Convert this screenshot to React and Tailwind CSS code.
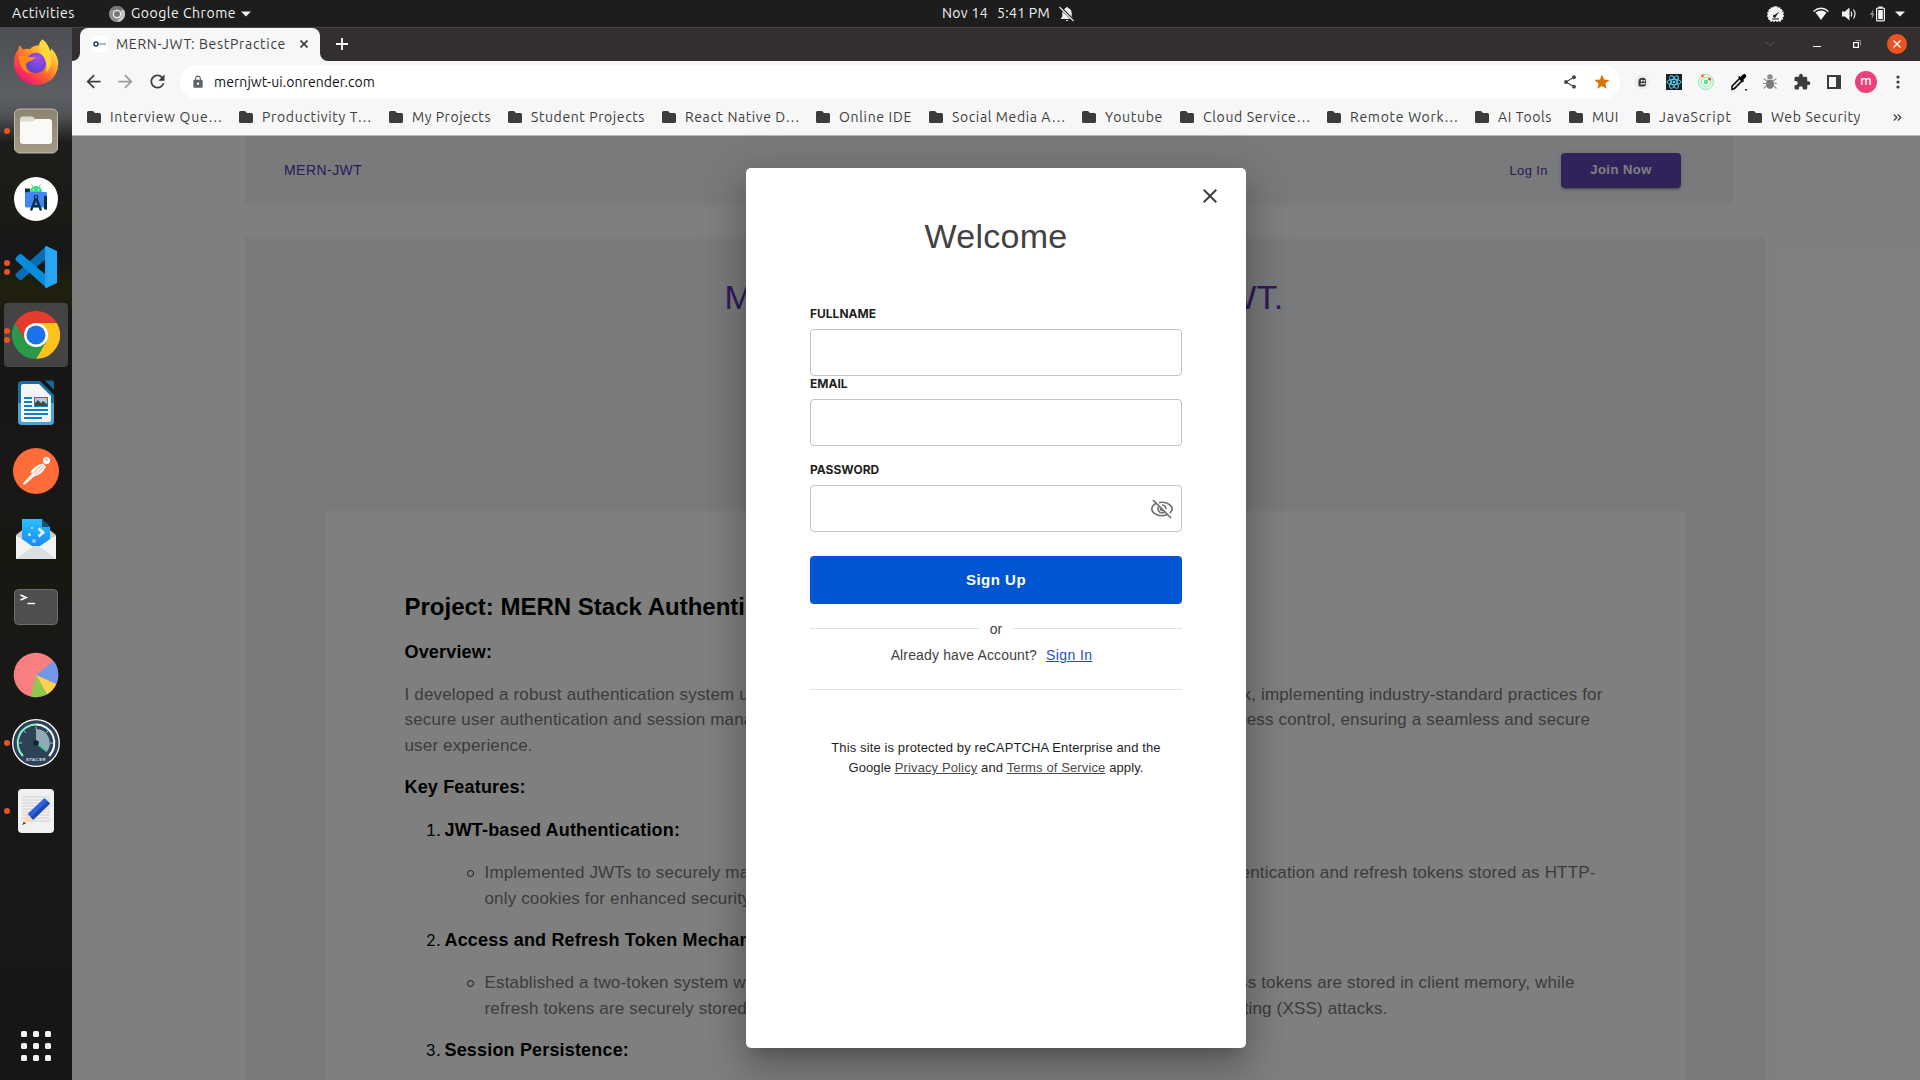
import { useLayoutEffect, useRef } from "react";
import {
  MdArrowBack,
  MdArrowForward,
  MdClose,
  MdExtension,
  MdLock,
  MdRefresh,
  MdShare,
  MdStar,
} from "react-icons/md";

/* Single-line label that spreads its letters over a given width. */
function Label({ text, width, className = "" }) {
  const ref = useRef(null);
  useLayoutEffect(() => {
    const el = ref.current;
    el.style.letterSpacing = "0px";
    const natural = el.getBoundingClientRect().width;
    el.style.letterSpacing = `${(width - natural) / text.length}px`;
  }, [text, width]);
  return (
    <span
      ref={ref}
      className={`inline-block whitespace-pre font-['Ubuntu','Noto_Sans',sans-serif] ${className}`}
    >
      {text}
    </span>
  );
}

/* ---------- dock icons ---------- */

const Firefox = () => (
  <svg width="48" height="48" viewBox="0 0 48 48">
    <defs>
      <linearGradient id="ffBody" x1="0.85" y1="0.1" x2="0.2" y2="0.95">
        <stop offset="0" stopColor="#fff04a" />
        <stop offset="0.35" stopColor="#ffa42c" />
        <stop offset="0.65" stopColor="#ff5634" />
        <stop offset="1" stopColor="#e8127c" />
      </linearGradient>
      <radialGradient id="ffGlobe" cx="0.6" cy="0.3" r="0.8">
        <stop offset="0" stopColor="#a14bf0" />
        <stop offset="1" stopColor="#4846c8" />
      </radialGradient>
    </defs>
    <path d="M30.5 0.500C35 4 37.500 9 38 12.500C39 11.500 39 10.500 39 9.500C44 14 46.500 20 46.300 25.500C45.500 38 36 46 24.500 46C12 46 2 36.500 2 24.500C2 17.500 4 13 6.500 10.500C6.500 9.500 6.800 8 7.600 6.500C9 8 10 9 11 10.500C14 9.500 16 9.700 18 10.200C20 7 24 6 27 6.500C27 4.500 28.500 2 30.500 0.500Z" fill="url(#ffBody)" />
    <circle cx="24" cy="24" r="10.200" fill="url(#ffGlobe)" />
    <path d="M7 17C12 16 18 19.500 24 17.500C22.500 22 17 21 14.500 24.500C12.500 28 15 33 20 34C13 35 7 28 7 17Z" fill="#ff8a1f" />
    <path d="M30.500 0.500C35 4 37.500 9 38 12.500C40 20 40 28 34 34C36 27 33 18 29 15C26 12 26 4 30.500 0.500Z" fill="#ffd93b" opacity="0.85" />
  </svg>
);

const Files = () => (
  <svg width="48" height="48" viewBox="0 0 48 48">
    <defs>
      <linearGradient id="flBg" x1="0" y1="0" x2="0" y2="1">
        <stop offset="0" stopColor="#8d8471" />
        <stop offset="1" stopColor="#a39b86" />
      </linearGradient>
    </defs>
    <rect x="2.500" y="2" width="43" height="44" rx="5" fill="url(#flBg)" stroke="#c9c3b3" strokeWidth="0.900" />
    <path d="M8 12.500a3 3 0 0 1 3-3h9c2 0 2.500 3 5 3h12v10H8Z" fill="#dedacf" />
    <path d="M8 16a2 2 0 0 1 2-1.500h10c2 0 2.500-2.500 5-2.500h12a3 3 0 0 1 3 3v19a3 3 0 0 1-3 3H11a3 3 0 0 1-3-3Z" fill="#faf9f8" />
  </svg>
);

const AndroidStudio = () => (
  <svg width="48" height="48" viewBox="0 0 48 48">
    <circle cx="24" cy="24" r="22" fill="#fff" />
    <path d="M13 13.500h5v5h-5Z" fill="#073042" />
    <path d="M17.500 17.500a6.500 6.500 0 0 1 13 0Z" fill="#3ddc84" />
    <path d="M19.500 9.500l2 3M28.500 9.500l-2 3" stroke="#3ddc84" strokeWidth="0.900" />
    <circle cx="21.500" cy="14.800" r="0.700" fill="#fff" />
    <circle cx="26.500" cy="14.800" r="0.700" fill="#fff" />
    <rect x="13" y="17" width="22" height="15.500" rx="1.500" fill="#4285f4" />
    <path d="M32 21h3v14l-3-1Z" fill="#073042" />
    <path d="M24 22.500L19 35.500M24 22.500L29 35.500M20.500 30.500q3.500 1.500 7 0" stroke="#073042" strokeWidth="2.300" fill="none" />
    <circle cx="24" cy="22.300" r="1.800" fill="#4285f4" stroke="#073042" strokeWidth="1.200" />
  </svg>
);

const VsCode = () => (
  <svg width="48" height="48" viewBox="0 0 48 48">
    <path d="M34 3.500L4 30.500Q3 32 4 33.500L7 36.500Q8.500 37.500 10 36.500L35 15Z" fill="#0a6cb4" />
    <path d="M4 17.500Q3 16 4 14.500L7 11.500Q8.500 10.500 10 11.500L35 33L34 44.500Z" fill="#0b8bdb" />
    <path d="M34 3L45 8V40L34 45Q35 44.500 35 42V6Q35 4 34 3Z" fill="#26a6f5" />
    <path d="M33 3.500L35.500 3V45L33 44.500Z" fill="#26a0ee" />
  </svg>
);

const Chrome = () => (
  <svg width="48" height="48" viewBox="0 0 48 48">
    <path d="M24 24L3.200 12A24 24 0 0 1 44.800 12Z" fill="#e33b2e" />
    <path d="M24 24V12H44.800A24 24 0 0 1 24 48L34.400 30Z" fill="#fcc31e" />
    <path d="M24 24L34.400 30L24 48A24 24 0 0 1 3.200 12L13.600 30Z" fill="#2a9a48" />
    <path d="M3.200 12L13.600 30L24 24V12Z" fill="#e33b2e" />
    <circle cx="24" cy="24" r="12" fill="#fff" />
    <circle cx="24" cy="24" r="9.500" fill="#1a73e8" />
  </svg>
);

const Writer = () => (
  <svg width="48" height="48" viewBox="0 0 48 48">
    <path d="M10 2H28L42 16V42a4 4 0 0 1-4 4H10a4 4 0 0 1-4-4V6a4 4 0 0 1 4-4Z" fill="#1571a8" />
    <path d="M6 24H42V42a4 4 0 0 1-4 4H10a4 4 0 0 1-4-4Z" fill="#4ba3d2" />
    <path d="M11 5H27L39 17V41a2 2 0 0 1-2 2H11a2 2 0 0 1-2-2V7a2 2 0 0 1 2-2Z" fill="#f5f5f5" />
    <path d="M33 1.500H40a2 2 0 0 1 2 2V11Z" fill="#12699e" />
    <path d="M12 19H20M12 23H20M12 27H20M12 31H36M12 35H36M12 39H30" stroke="#0f80c0" strokeWidth="2" />
    <rect x="22" y="18" width="14" height="10" fill="#1783bf" />
    <rect x="23" y="19" width="12" height="8" fill="#9fd2ee" />
    <path d="M32 19h3v3Z" fill="#f9b916" />
    <path d="M23 27v-3l3-3 3 3 2-2 4 3v2Z" fill="#44484a" />
  </svg>
);

const Postman = () => (
  <svg width="48" height="48" viewBox="0 0 48 48">
    <circle cx="24" cy="24" r="23" fill="#ff6c37" />
    <circle cx="34.500" cy="13.500" r="3.500" fill="#fff" />
    <path d="M31 16.500L34 19.500Q30 28 22 29.500L13 37.500L10.500 37L21 25.500L18 26Q22 18.500 31 16.500Z" fill="#fff" />
    <path d="M21.500 26L30 18M23.500 27.500L32 19.500M33.500 11l2.500 3.500" stroke="#ff6c37" strokeWidth="0.800" />
  </svg>
);

const Mailspring = () => (
  <svg width="48" height="48" viewBox="0 0 48 48">
    <defs>
      <linearGradient id="mlDoc" x1="0" y1="0" x2="0" y2="1">
        <stop offset="0" stopColor="#27c0fb" />
        <stop offset="1" stopColor="#1d86f2" />
      </linearGradient>
    </defs>
    <path d="M4 20L14 12H34L44 20L30 32H18Z" fill="#c9ced2" />
    <path d="M10 4H30L38 12V26L28 32H20L10 25Z" fill="url(#mlDoc)" />
    <path d="M30 4L38 12H30Z" fill="#1d4d6d" />
    <path d="M26.500 13.500L31 17.500L26.500 21.500" fill="none" stroke="#e9f5fe" strokeWidth="2.800" />
    <circle cx="17.500" cy="19.500" r="1.500" fill="#c9ecff" />
    <circle cx="20" cy="13" r="1" fill="#c9ecff" />
    <circle cx="22" cy="26" r="2" fill="#8fc9ff" />
    <path d="M4 20L20 31Q24 32 28 31L44 20V44H4Z" fill="#f2f3f4" />
    <path d="M4 44L22 31H27L44 44Z" fill="#dcdfe1" />
  </svg>
);

const Terminal = () => (
  <svg width="48" height="48" viewBox="0 0 48 48">
    <rect x="2.500" y="6.500" width="43" height="35" rx="4" fill="#4e4e4e" stroke="#6e6e6e" />
    <path d="M8.500 12L14 14.500L8.500 17" fill="none" stroke="#fff" strokeWidth="1.800" />
    <path d="M15.500 20.500H23" stroke="#fff" strokeWidth="1.500" />
  </svg>
);

const DiskUsage = () => (
  <svg width="48" height="48" viewBox="0 0 48 48">
    <circle cx="24" cy="24" r="22.300" fill="#f77f7f" />
    <path d="M24 24L41.500 10A22.300 22.300 0 0 1 44.200 33Z" fill="#7497ee" />
    <path d="M24 24L44.200 33A22.300 22.300 0 0 1 35 43.300Z" fill="#fad152" />
    <path d="M24 24L35 43.300A22.300 22.300 0 0 1 19 45.700Z" fill="#8cc84e" />
  </svg>
);

const Stacer = () => (
  <svg width="48" height="48" viewBox="0 0 48 48">
    <circle cx="24" cy="24" r="23.300" fill="#2f4157" stroke="#fff" strokeWidth="1.300" />
    <path d="M11 37A18.500 18.500 0 0 1 24 5.500" fill="none" stroke="#7ff0c2" strokeWidth="2" />
    <path d="M24 5.500A18.500 18.500 0 0 1 37 37" fill="none" stroke="#f0fcf8" strokeWidth="2" />
    <path d="M24 24V10A14 14 0 0 1 34.500 33Z" fill="#a9c6cd" opacity="0.800" />
    <path d="M24 24L34 32" stroke="#2ecc9b" strokeWidth="1.500" />
    <path d="M24 7.500v3M7 24h3M38 24h3M12 12l2 2M36 12l-2 2" stroke="#b9c9d0" strokeWidth="0.900" />
    <circle cx="24" cy="24" r="2.800" fill="#17222e" />
    <text x="24" y="41.500" textAnchor="middle" fontSize="4.200" fontWeight="700" letterSpacing="0.500" fill="#dfe6ea" fontFamily="Liberation Sans">STACER</text>
  </svg>
);

const TextEditor = () => (
  <svg width="48" height="48" viewBox="0 0 48 48">
    <rect x="6" y="2" width="36" height="44" rx="4" fill="#f1f1f1" />
    <path d="M10 10H38M10 13H38M10 16H38M10 19H38M10 22H38M10 25H38M10 28H38M10 31H38M10 34H38" stroke="#cfcfcf" strokeWidth="1" />
    <path d="M15.500 27L32.500 11L38 16.500L21 33Z" fill="#2f63dd" />
    <path d="M18.500 30.500L35.500 14L38 16.500L21 33Z" fill="#1f48b5" />
    <path d="M15.500 27L21 33L10.500 38Z" fill="#fbd9b8" />
    <path d="M11.800 34.800L13.800 36.500L10.200 38Z" fill="#3a3a3a" />
  </svg>
);

const DOCK = [
  { name: "firefox", Icon: Firefox, dots: 0 },
  { name: "files", Icon: Files, dots: 1 },
  { name: "android-studio", Icon: AndroidStudio, dots: 0 },
  { name: "vscode", Icon: VsCode, dots: 2 },
  { name: "chrome", Icon: Chrome, dots: 2, active: true },
  { name: "writer", Icon: Writer, dots: 0 },
  { name: "postman", Icon: Postman, dots: 0 },
  { name: "mail", Icon: Mailspring, dots: 0 },
  { name: "terminal", Icon: Terminal, dots: 0 },
  { name: "disk-usage", Icon: DiskUsage, dots: 0 },
  { name: "stacer", Icon: Stacer, dots: 1 },
  { name: "text-editor", Icon: TextEditor, dots: 1 },
];

function Dock() {
  return (
    <aside className="flex w-[72px] shrink-0 flex-col bg-[linear-gradient(180deg,#4b4d52_0px,#5c5f63_70px,#505356_88px,#1d1d1b_115px,#191b15_190px,#16171a_230px,#20200f_260px,#171615_310px,#191817_480px,#15180f_520px,#191817_620px,#161817_830px,#171615_1052px)] pt-0.5">
      {DOCK.map(({ name, Icon, dots, active }) => (
        <div key={name} className="relative flex h-[68px] items-center justify-center">
          <div
            className={
              active
                ? "flex size-16 items-center justify-center rounded bg-[#454444]"
                : "flex size-16 items-center justify-center"
            }
          >
            <Icon />
          </div>
          <div className="absolute inset-y-0 left-1 flex flex-col items-center justify-center gap-[3px]">
            {Array.from({ length: dots }, (_, i) => (
              <span key={i} className="size-1.5 rounded-full bg-[#e95420]" />
            ))}
          </div>
        </div>
      ))}
      <div className="mt-auto mb-[19px] grid grid-cols-3 gap-1.5 self-center">
        {Array.from({ length: 9 }, (_, i) => (
          <span key={i} className="size-1.5 rounded-[1.500px] bg-[#f2f1ef]" />
        ))}
      </div>
    </aside>
  );
}

/* ---------- system bar ---------- */

const Caret = () => (
  <svg width="10" height="6" viewBox="0 0 10 6">
    <path d="M0 0.500H10L5 5.500Z" fill="#f2f2f2" />
  </svg>
);

function SystemBar() {
  return (
    <header className="flex h-[27px] items-center bg-[#1d1d1d] text-[14px] leading-[27px] text-[#f2f2f2]">
      <div className="flex w-[942px] shrink-0 items-center pl-3">
        <div className="w-[97px]">
          <Label text="Activities" width={63} />
        </div>
        <svg className="mr-1.5" width="16" height="16" viewBox="0 0 16 16">
          <circle cx="8" cy="8" r="8" fill="#8f8f8f" />
          <path d="M1 4A8 8 0 0 1 15 4H8Z" fill="#777" />
          <path d="M8 16L12 9.500V4H15A8 8 0 0 1 8 16Z" fill="#c4c4c4" />
          <circle cx="8" cy="8" r="4.200" fill="#f2f2f2" />
          <circle cx="8" cy="8" r="3" fill="#777" />
        </svg>
        <Label text="Google Chrome" width={105} className="mr-[5px]" />
        <Caret />
      </div>
      <Label text="Nov 14" width={46} className="mr-[9px]" />
      <Label text="5:41 PM" width={53} className="mr-[9px]" />
      <svg width="16" height="16" viewBox="0 0 16 16">
        <path d="M8 1a1 1 0 0 1 1 1q3.500 1 3.700 5v3.500L14.500 13H1.500L3.300 10.500V7Q3.500 3 7 2a1 1 0 0 1 1-1ZM6.500 14h3q-1.500 2-3 0Z" fill="#f2f2f2" />
        <path d="M1 1L15 15" stroke="#1d1d1d" strokeWidth="2.600" />
        <path d="M0.500 1L14.500 15" stroke="#f2f2f2" strokeWidth="1.100" />
      </svg>
      <div className="ml-auto flex items-center pr-[15px]">
        <svg className="mr-[29px]" width="17" height="16" viewBox="0 0 17 16">
          <path d="M8.500 1A8 7.800 0 0 1 14.500 13.500L13 15H4L2.500 13.500A8 7.800 0 0 1 8.500 1Z" fill="#f2f2f2" stroke="#f2f2f2" strokeWidth="1.600" strokeDasharray="2 1" />
          <path d="M12.500 5.500L9 10.200A1.500 1.500 0 1 1 7.800 8.800Z" fill="#1d1d1d" />
          <path d="M5 13H12" stroke="#1d1d1d" />
        </svg>
        <svg className="mr-[13px]" width="16" height="14" viewBox="0 0 16 14">
          <path d="M0.500 4.500Q8 -2 15.500 4.500" fill="none" stroke="#f2f2f2" strokeWidth="1.400" />
          <path d="M2.500 5.500Q8 1.500 13.500 5.500L8 13Z" fill="#f2f2f2" />
        </svg>
        <svg className="mr-[13px]" width="15" height="14" viewBox="0 0 15 14">
          <path d="M0 4.500H3L7.500 0.500V13.500L3 9.500H0Z" fill="#f2f2f2" />
          <path d="M9 4.500Q10.500 7 9 9.500M11.500 2.500Q14.500 7 11.500 11.500" fill="none" stroke="#f2f2f2" strokeWidth="1.200" />
        </svg>
        <svg className="mr-[10px]" width="15" height="16" viewBox="0 0 15 16">
          <path d="M3.500 3L0 9H2L1.500 13.500L4.500 7.500H2.800Z" fill="#8c8c8c" />
          <rect x="6.600" y="2.100" width="7.800" height="12.800" rx="1" fill="none" stroke="#f2f2f2" strokeWidth="1.200" />
          <rect x="8.200" y="4" width="4.600" height="9.200" fill="#f2f2f2" />
          <path d="M8.500 0.500h4v1.500h-4Z" fill="#f2f2f2" />
        </svg>
        <Caret />
      </div>
    </header>
  );
}

/* ---------- browser chrome ---------- */

function TabStrip() {
  return (
    <div className="flex h-[34px] items-end border-t border-[#474545] bg-[#332f30]">
      <svg className="shrink-0" width="8" height="8" viewBox="0 0 8 8">
        <path d="M8 0V8H0A8 8 0 0 0 8 0Z" fill="#f7f7f7" />
      </svg>
      <div className="flex h-[33px] w-60 items-center rounded-t-lg bg-[#f7f7f7] pb-0.5 pl-3">
        <svg className="mr-2 shrink-0" width="16" height="16" viewBox="0 0 16 16">
          <rect width="16" height="16" fill="#fff" />
          <circle cx="4" cy="8" r="2" fill="none" stroke="#1f3b5c" strokeWidth="1.500" />
          <path d="M6 8H14" stroke="#5e7b9b" strokeWidth="1.500" strokeDasharray="1.500 0.600" />
        </svg>
        <Label text="MERN-JWT: BestPractice" width={170} className="text-[14px] leading-5 text-[#3c3c3c]" />
        <svg className="ml-3.5" width="8" height="8" viewBox="0 0 8 8">
          <path d="M0.500 0.500L7.500 7.500M7.500 0.500L0.500 7.500" stroke="#3c3c3c" strokeWidth="1.700" />
        </svg>
      </div>
      <svg className="shrink-0" width="8" height="8" viewBox="0 0 8 8">
        <path d="M0 0V8H8A8 8 0 0 1 0 0Z" fill="#f7f7f7" />
      </svg>
      <div className="flex h-[33px] flex-1 items-center pb-px pl-2">
        <svg width="12" height="12" viewBox="0 0 12 12">
          <path d="M6 0V12M0 6H12" stroke="#fff" strokeWidth="1.800" />
        </svg>
        <div className="ml-auto flex h-full items-center pr-[13px]">
          <svg className="mr-[38px]" width="10" height="6" viewBox="0 0 10 6">
            <path d="M0.500 0.500L5 5L9.500 0.500" fill="none" stroke="#454343" strokeWidth="1.500" />
          </svg>
          <svg className="mr-8" width="8" height="8" viewBox="0 0 8 8">
            <path d="M0 6.500H8" stroke="#fff" />
          </svg>
          <svg className="mr-[26px]" width="8" height="8" viewBox="0 0 8 8">
            <path d="M2.500 0.500H7.500V5.500" fill="none" stroke="#8d8b8b" />
            <rect x="0.600" y="2.600" width="4.800" height="4.800" fill="none" stroke="#fff" strokeWidth="1.200" />
          </svg>
          <span className="flex size-5 items-center justify-center rounded-full bg-[#e95420]">
            <svg width="8" height="8" viewBox="0 0 8 8">
              <path d="M0.500 0.500L7.500 7.500M7.500 0.500L0.500 7.500" stroke="#fff" strokeWidth="1.400" />
            </svg>
          </span>
        </div>
      </div>
    </div>
  );
}

const Ghost = () => (
  <svg width="16" height="16" viewBox="0 0 16 16">
    <circle cx="8" cy="8" r="7.500" fill="#ededed" />
    <path d="M4.500 12V7.500Q4.500 3.800 8.500 3.800Q12 3.800 12 7V10.500Q12 12.500 9.500 12.500H6Z" fill="#3a3a3a" />
    <circle cx="7.800" cy="6.800" r="1" fill="#fff" />
    <circle cx="10.300" cy="6.800" r="0.900" fill="#fff" />
    <path d="M6.500 9.800h5" stroke="#fff" strokeWidth="1.100" />
  </svg>
);

const ReactBadge = () => (
  <svg width="16" height="16" viewBox="0 0 16 16">
    <rect width="16" height="16" fill="#1b2127" />
    <g fill="none" stroke="#61dafb" strokeWidth="0.900">
      <ellipse cx="8" cy="8" rx="7" ry="2.700" />
      <ellipse cx="8" cy="8" rx="7" ry="2.700" transform="rotate(60 8 8)" />
      <ellipse cx="8" cy="8" rx="7" ry="2.700" transform="rotate(120 8 8)" />
    </g>
    <circle cx="8" cy="8" r="1.300" fill="#61dafb" />
  </svg>
);

const Orbit = () => (
  <svg width="16" height="16" viewBox="0 0 16 16">
    <circle cx="8" cy="8" r="7.400" fill="none" stroke="#7ee8a2" strokeWidth="1" />
    <circle cx="8" cy="8" r="4.800" fill="none" stroke="#7ee8a2" strokeWidth="1" />
    <circle cx="8" cy="8" r="2.300" fill="#5fe08c" />
    <circle cx="4.500" cy="1.800" r="1.600" fill="#ff7a45" />
    <circle cx="11.500" cy="5" r="1.600" fill="#f4502a" />
  </svg>
);

const Dropper = () => (
  <svg className="ml-0.5" width="16" height="18" viewBox="0 0 16 18">
    <path d="M1 16.500V13L8.500 5.500L11 8L3.500 15.500Z" fill="#d9d9d9" stroke="#000" strokeWidth="1.500" />
    <path d="M7 4L8.500 3L9.500 4L12 1.500Q14 0.500 15 2Q15.700 3.500 14.500 4.500L12.200 7L13 8L11.800 9.500Z" fill="#000" />
    <rect x="14.200" y="16" width="1.600" height="1.600" fill="#000" />
  </svg>
);

const Bug = () => (
  <svg width="14" height="16" viewBox="0 0 14 16">
    <path d="M0.500 4.500L4 7M13.500 4.500L10 7M0 9.500H14M0.500 14.500L4 11.500M13.500 14.500L10 11.500" stroke="#9a9a9a" strokeWidth="1.200" />
    <ellipse cx="7" cy="10" rx="4" ry="5" fill="#7c7c7c" />
    <circle cx="7" cy="3" r="2.800" fill="#8d8d8d" />
    <path d="M4.500 5.500h5" stroke="#d0d0d0" />
  </svg>
);

const SidePanel = () => (
  <svg width="14" height="14" viewBox="0 0 14 14">
    <rect x="1" y="1" width="12" height="12" fill="none" stroke="#3c3c3c" strokeWidth="2" />
    <rect x="9" y="1" width="4" height="12" fill="#3c3c3c" />
  </svg>
);

const Avatar = () => (
  <span className="flex size-[22px] items-center justify-center rounded-full bg-[#ec407a] pb-px font-['Noto_Sans',sans-serif] text-[12px] leading-none font-medium text-white">
    m
  </span>
);

const Dots = () => (
  <svg width="4" height="14" viewBox="0 0 4 14">
    <circle cx="2" cy="2" r="1.600" fill="#3c3c3c" />
    <circle cx="2" cy="7" r="1.600" fill="#3c3c3c" />
    <circle cx="2" cy="12" r="1.600" fill="#3c3c3c" />
  </svg>
);

const Puzzle = () => <MdExtension size={18} color="#3c3c3c" />;

const EXTENSIONS = [Ghost, ReactBadge, Orbit, Dropper, Bug, Puzzle, SidePanel, Avatar, Dots];

function Toolbar() {
  return (
    <div className="flex h-[41px] items-center bg-[#f7f7f7] pl-[5.500px] pr-[6px]">
      <div className="flex size-8 items-center justify-center text-[#3c3c3c]">
        <MdArrowBack size={21} />
      </div>
      <div className="flex size-8 items-center justify-center text-[#9c9c9c]">
        <MdArrowForward size={21} />
      </div>
      <div className="flex size-8 items-center justify-center text-[#3c3c3c]">
        <MdRefresh size={21} />
      </div>
      <div className="ml-[6.500px] flex h-[34px] flex-1 items-center rounded-full bg-white pl-[11px] pr-0.5">
        <MdLock className="mr-[9px]" size={14} color="#5f6368" />
        <Label text="mernjwt-ui.onrender.com" width={161} className="text-[14px] leading-5 text-[#111]" />
        <div className="ml-auto flex size-8 items-center justify-center">
          <MdShare size={16} color="#4a4a4a" />
        </div>
        <div className="flex size-8 items-center justify-center">
          <MdStar size={18} color="#d9730d" />
        </div>
      </div>
      <div className="ml-1.5 flex">
        {EXTENSIONS.map((Ext, i) => (
          <div key={i} className="flex size-8 items-center justify-center">
            <Ext />
          </div>
        ))}
      </div>
    </div>
  );
}

const BOOKMARKS = [
  { text: "Interview Que…", width: 113, slot: "w-[152px]" },
  { text: "Productivity T…", width: 110, slot: "w-[150px]" },
  { text: "My Projects", width: 79, slot: "w-[119px]" },
  { text: "Student Projects", width: 114, slot: "w-[154px]" },
  { text: "React Native D…", width: 115, slot: "w-[154px]" },
  { text: "Online IDE", width: 73, slot: "w-[113px]" },
  { text: "Social Media A…", width: 114, slot: "w-[153px]" },
  { text: "Youtube", width: 58, slot: "w-[98px]" },
  { text: "Cloud Service…", width: 108, slot: "w-[147px]" },
  { text: "Remote Work…", width: 109, slot: "w-[148px]" },
  { text: "AI Tools", width: 54, slot: "w-[94px]" },
  { text: "MUI", width: 27, slot: "w-[67px]" },
  { text: "JavaScript", width: 73, slot: "w-[112px]" },
  { text: "Web Security", width: 90, slot: "w-[145px]" },
];

function BookmarksBar() {
  return (
    <div className="flex h-[34px] items-center border-b border-[#b8b8b8] bg-[#f7f7f7] pl-[15px] pb-[3px]">
      {BOOKMARKS.map(({ text, width, slot }) => (
        <div key={text} className={`flex shrink-0 items-center ${slot}`}>
          <svg className="mr-[9px] shrink-0" width="14" height="12" viewBox="0 0 14 12">
            <path d="M1.500 0H6L8 2H12.500A1.500 1.500 0 0 1 14 3.500V10.500A1.500 1.500 0 0 1 12.500 12H1.500A1.500 1.500 0 0 1 0 10.500V1.500A1.500 1.500 0 0 1 1.500 0Z" fill="#3c3c3c" />
          </svg>
          <Label text={text} width={width} className="text-[14px] leading-5 text-[#3c3c3c]" />
        </div>
      ))}
      <svg width="9" height="7" viewBox="0 0 9 7">
        <path d="M0.800 0.500L3.800 3.500L0.800 6.500M4.800 0.500L7.800 3.500L4.800 6.500" fill="none" stroke="#4a4a4a" strokeWidth="1.400" />
      </svg>
    </div>
  );
}

/* ---------- page ---------- */

const Line = ({ start, end, className = "" }) => (
  <span className={`flex justify-between whitespace-nowrap ${className}`}>
    <span>{start}</span>
    <span>{end}</span>
  </span>
);

const Feature = ({ n, title, children }) => (
  <li className="flex flex-col gap-4">
    <div className="flex items-center">
      <span className="w-9 text-right font-['Inter',sans-serif] text-[16px] leading-[27px] text-black tabular-nums">
        {n}.
      </span>
      <h3 className="ml-1 text-[18px] leading-[27px] font-bold tracking-[0.170px] text-black">{title}</h3>
    </div>
    {children && (
      <div className="flex pl-[62px]">
        <span className="mt-[10px] mr-[11px] size-[7px] shrink-0 rounded-full border-[1.500px] border-black/80" />
        <div className="text-[17px] leading-[25.500px] tracking-[0.00938em] text-[#787878]">{children}</div>
      </div>
    )}
  </li>
);

function Page() {
  return (
    <div className="h-full overflow-hidden bg-white pl-[173px]">
      <nav className="flex h-[69px] w-[1488px] items-center bg-[#f0f4f7] pr-[52px] pl-[39px]">
        <span className="text-[14px] tracking-[0.450px] text-[#5e35b1]">MERN-JWT</span>
        <span className="ml-auto text-[13px] tracking-[0.400px] text-[#5e35b1]">Log In</span>
        <button className="ml-[13px] h-[35px] w-[120px] rounded bg-[#6045b6] pb-px text-[13px] font-bold tracking-[0.460px] text-white shadow-[0_3px_1px_-2px_rgba(0,0,0,0.2),0_2px_2px_0_rgba(0,0,0,0.14),0_1px_5px_0_rgba(0,0,0,0.12)]">
          Join Now
        </button>
      </nav>
      <section className="mt-8 flex h-[900px] w-[1520px] flex-col items-center bg-[#f0f4f7] pt-[39px]">
        <h1 className="mr-0.5 flex h-[42px] w-[559px] shrink-0 justify-between text-[34px] leading-[42px] tracking-[0.250px] whitespace-nowrap text-[#5e35b1]">
          <span>MERN</span>
          <span>with JWT.</span>
        </h1>
        <article className="mt-[193px] flex w-[1360px] flex-1 flex-col gap-4 bg-white pt-[79.500px] pl-[79.500px]">
          <h2 className="text-[24px] leading-8 font-bold text-black">Project: MERN Stack Authentication</h2>
          <h3 className="text-[18px] leading-[27px] font-bold tracking-[0.170px] text-black">Overview:</h3>
          <p className="text-[17px] leading-[25.500px] tracking-[0.00938em] text-[#787878]">
            <Line className="w-[1198px]" start="I developed a robust authentication system using" end="stack, implementing industry-standard practices for" />
            <Line className="w-[1185.500px]" start="secure user authentication and session management" end="access control, ensuring a seamless and secure" />
            <span className="block">user experience.</span>
          </p>
          <h3 className="text-[18px] leading-[27px] font-bold tracking-[0.170px] text-black">Key Features:</h3>
          <ol className="flex flex-col gap-4">
            <Feature n={1} title="JWT-based Authentication:">
              <Line className="w-[1111px]" start="Implemented JWTs to securely manage" end="authentication and refresh tokens stored as HTTP-" />
              <Line start="only cookies for enhanced security." />
            </Feature>
            <Feature n={2} title="Access and Refresh Token Mechanism:">
              <Line className="w-[1090px]" start="Established a two-token system where" end="access tokens are stored in client memory, while" />
              <Line className="w-[903px]" start="refresh tokens are securely stored" end="scripting (XSS) attacks." />
            </Feature>
            <Feature n={3} title="Session Persistence:" />
          </ol>
        </article>
      </section>
    </div>
  );
}

const Field = ({ label, children, className = "" }) => (
  <label className={`flex flex-col ${className}`}>
    <span className="font-['Inter',sans-serif] text-[12px] leading-4 font-bold text-[#1f1f1f]">{label}</span>
    <span className="mt-[7px] flex h-[47px] items-center justify-end rounded border border-[#c1c1c1] pr-[7px]">{children}</span>
  </label>
);

const EyeOff = () => (
  <svg width="24" height="24" viewBox="0 0 24 24" fill="none" stroke="#6e6e6e" strokeWidth="1.600">
    <path d="M6.500 6.300C3.500 7.600 1.800 10 1.800 12C1.800 15.500 6.500 18.700 12 18.700C14.200 18.700 16 18.200 17.700 17.300" />
    <path d="M9 5.600C10 5.400 11 5.300 12 5.300C17.500 5.300 22.200 8.500 22.200 12C22.200 13.500 21.400 14.800 19.800 16" />
    <path d="M8.600 9.800C7 12.500 9 16 12 16C13 16 13.600 15.800 14.300 15.400" />
    <path d="M12 8C14.500 8.200 16 10 16 12.300" />
    <path d="M11 10.500C9.900 12 11 13.600 12.600 13.400" />
    <path d="M3 3L21 21" strokeWidth="1.700" />
  </svg>
);

function SignUpDialog() {
  return (
    <div className="h-[880px] w-[500px] rounded-[5px] bg-white px-16 text-[#424242] shadow-[0_11px_15px_-7px_rgba(0,0,0,0.2),0_24px_38px_3px_rgba(0,0,0,0.14),0_9px_46px_8px_rgba(0,0,0,0.12)]">
      <div className="-mr-10 flex h-[47px] items-end justify-end pb-[7px] text-[#3f3f3f]">
        <MdClose size={24} />
      </div>
      <h2 className="text-center text-[34px] leading-[42px] tracking-[0.250px]">Welcome</h2>
      <form className="mt-[49px] flex flex-col">
        <Field label="FULLNAME" />
        <Field label="EMAIL" />
        <Field label="PASSWORD" className="mt-4">
          <EyeOff />
        </Field>
        <button type="button" className="mt-6 h-12 rounded bg-[#0056d2] text-[15px] font-bold tracking-[0.500px] text-white">
          Sign Up
        </button>
      </form>
      <div className="mt-[14px] flex h-5 items-center">
        <span className="h-px flex-1 bg-[#e0e0e0]" />
        <span className="w-8 pt-px text-center text-[14px] leading-5 tracking-[0.150px]">or</span>
        <span className="h-px flex-1 bg-[#e0e0e0]" />
      </div>
      <p className="mt-[5px] flex h-6 items-center justify-center gap-[9px] pr-[9px] text-[14px] tracking-[0.150px]">
        <span>Already have Account?</span>
        <a className="tracking-[0.400px] text-[#1f4bd8] underline decoration-[#0056d2] underline-offset-1">Sign In</a>
      </p>
      <hr className="mt-[22px] border-[#e0e0e0]" />
      <p className="mt-12 text-center text-[13px] leading-[20px] tracking-[0.120px] text-[#1f1f1f]">
        This site is protected by reCAPTCHA Enterprise and the
        <br />
        Google <a className="text-[#4a4a4a] underline">Privacy Policy</a> and{" "}
        <a className="text-[#4a4a4a] underline">Terms of Service</a> apply.
      </p>
    </div>
  );
}

export default function App() {
  return (
    <div className="flex h-[1080px] w-[1920px] flex-col overflow-hidden font-['Liberation_Sans',Arial,sans-serif]">
      <SystemBar />
      <div className="flex min-h-0 flex-1">
        <Dock />
        <main className="flex min-w-0 flex-1 flex-col">
          <TabStrip />
          <Toolbar />
          <BookmarksBar />
          <div className="relative min-h-0 flex-1">
            <Page />
            <div className="absolute inset-0 flex justify-center bg-black/50 pt-8">
              <SignUpDialog />
            </div>
          </div>
        </main>
      </div>
    </div>
  );
}
